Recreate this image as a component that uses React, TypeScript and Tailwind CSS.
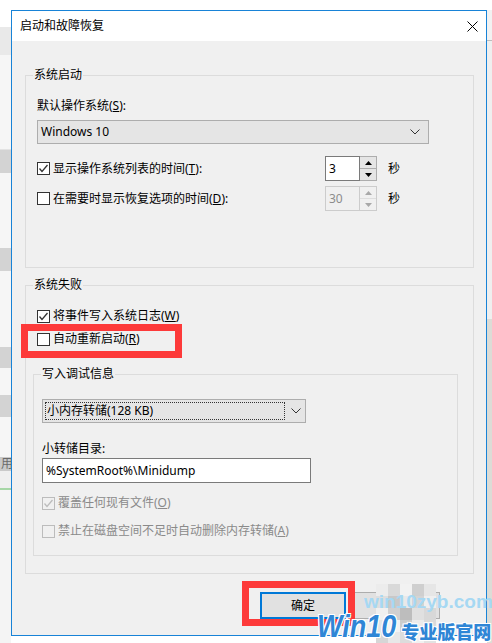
import React from "react";

const FONT = "font-['Noto_Sans','Noto_Sans_CJK_SC',sans-serif]";

function Check({ checked, disabled }: { checked?: boolean; disabled?: boolean }) {
  return (
    <span
      className={`inline-flex w-[13px] h-[13px] shrink-0 items-center justify-center border ${
        disabled ? "border-[#bcbcbc] bg-[#f0f0f0]" : "border-[#333333] bg-white"
      }`}
    >
      {checked && (
        <svg width="11" height="11" viewBox="0 0 11 11">
          <polyline
            points="1.5,5.5 4,8.5 9.5,2"
            fill="none"
            stroke={disabled ? "#bcbcbc" : "#333333"}
            strokeWidth="1.3"
          />
        </svg>
      )}
    </span>
  );
}

function Chevron() {
  return (
    <svg width="10" height="6" viewBox="0 0 10 6">
      <polyline points="0.5,0.5 5,5 9.5,0.5" fill="none" stroke="#333" strokeWidth="1" />
    </svg>
  );
}

function Spin({ value, disabled }: { value: string; disabled?: boolean }) {
  return (
    <div className="flex h-[25px] w-[52px]">
      <div
        className={`flex-1 flex items-center pl-[3px] border text-[12px] ${
          disabled ? "border-[#cccccc] bg-[#f0f0f0] text-[#8c8c8c]" : "border-[#7a7a7a] bg-white text-black"
        }`}
      >
        {value}
      </div>
      <div className={`w-[17px] flex flex-col border border-l-0 ${disabled ? "border-[#cccccc]" : "border-[#adadad]"}`}>
        <div className={`flex-1 flex items-center justify-center border-b ${disabled ? "bg-[#f0f0f0] border-[#dddddd]" : "bg-[#e5e5e5] border-[#adadad]"}`}>
          <svg width="7" height="4" viewBox="0 0 7 4">
            <polygon points="0,4 7,4 3.5,0" fill={disabled ? "#a8a8a8" : "#000"} />
          </svg>
        </div>
        <div className={`flex-1 flex items-center justify-center ${disabled ? "bg-[#f0f0f0]" : "bg-[#e5e5e5]"}`}>
          <svg width="7" height="4" viewBox="0 0 7 4">
            <polygon points="0,0 7,0 3.5,4" fill={disabled ? "#a8a8a8" : "#000"} />
          </svg>
        </div>
      </div>
    </div>
  );
}

const mosaic = [
  "bg-[#ececec]", "bg-[#d9d9d9]", "bg-[#f2f2f2]", "bg-[#cfcfcf]", "bg-[#e6e6e6]",
  "bg-[#dedede]", "bg-[#c8c8c8]", "bg-[#e9e9e9]", "bg-[#d4d4d4]", "bg-[#efefef]",
  "bg-[#f0f0f0]", "bg-[#d0d0d0]", "bg-[#bdbdbd]", "bg-[#e0e0e0]", "bg-[#d8d8d8]",
  "bg-[#e4e4e4]", "bg-[#f3f3f3]", "bg-[#cccccc]", "bg-[#ebebeb]", "bg-[#dadada]",
  "bg-[#d6d6d6]", "bg-[#e8e8e8]", "bg-[#dcdcdc]", "bg-[#f1f1f1]", "bg-[#e2e2e2]",
];

export default function App() {
  return (
    <div className={`relative w-[492px] h-[643px] bg-white overflow-hidden ${FONT} text-[12px] leading-[16px] text-black`}>
      <div className="flex h-full">
        {/* left background strip */}
        <div className="w-[11px] flex flex-col">
          <div className="h-[27px] bg-white" />
          <div className="h-[28px] bg-[#e9e9e9]" />
          <div className="h-[95px] bg-[#f6f6f6] border-b border-[#e3e3e3]" />
          <div className="h-[23px] bg-[#d3d3d3]" />
          <div className="h-[75px] bg-[#f6f6f6]" />
          <div className="h-[23px] bg-[#d3d3d3]" />
          <div className="h-[76px] bg-[#f6f6f6]" />
          <div className="h-[21px] bg-[#d3d3d3]" />
          <div className="h-[27px] bg-[#f6f6f6]" />
          <div className="h-[22px] bg-[#d3d3d3]" />
          <div className="h-[40px] bg-[#f6f6f6]" />
          <div className="h-[14px] bg-[#c9c9c9] overflow-hidden text-[12px] leading-[14px] text-[#6a6a6a] pl-[1px]">用</div>
          <div className="h-[17px] bg-[#efefef]" />
          <div className="h-[2px] bg-[#a6d6a6]" />
          <div className="flex-1 bg-[#f4f4f4]" />
        </div>

        <div className="flex flex-col">
          <div className="h-[10px]" />
          {/* dialog */}
          <div className="w-[476px] h-[626px] border border-[#1883d7] bg-[#f0f0f0] flex flex-col">
            <div className="h-[30px] bg-white flex items-center justify-between pl-[8px] pr-[8px]">
              <span className="text-[12px]">启动和故障恢复</span>
              <svg width="11" height="11" viewBox="0 0 11 11">
                <path d="M0.5 0.5 L10.5 10.5 M10.5 0.5 L0.5 10.5" stroke="#000" strokeWidth="1" />
              </svg>
            </div>

            <div className="flex-1 flex flex-col pl-[13px] pr-[12px] pt-[34px]">
              {/* group 1 */}
              <div className="relative h-[193px] border border-[#dcdcdc] flex flex-col pl-[11px] pt-[22px]">
                <span className="absolute left-[7px] top-[-9px] bg-[#f0f0f0] px-[1px]">系统启动</span>
                <div className="h-[16px]">
                  默认操作系统(<u>S</u>):
                </div>
                <div className="mt-[6px] h-[24px] w-[392px] border border-[#adadad] bg-[#e5e5e5] flex items-center justify-between pl-[3px] pr-[8px]">
                  <span>Windows 10</span>
                  <Chevron />
                </div>
                <div className="mt-[12px] h-[25px] flex items-center">
                  <div className="w-[288px] flex items-center gap-[3px]">
                    <Check checked />
                    <span>
                      显示操作系统列表的时间(<u>T</u>):
                    </span>
                  </div>
                  <Spin value="3" />
                  <span className="ml-[11px]">秒</span>
                </div>
                <div className="mt-[5px] h-[25px] flex items-center">
                  <div className="w-[288px] flex items-center gap-[3px]">
                    <Check />
                    <span>
                      在需要时显示恢复选项的时间(<u>D</u>):
                    </span>
                  </div>
                  <Spin value="30" disabled />
                  <span className="ml-[11px]">秒</span>
                </div>
              </div>

              {/* group 2 */}
              <div className="relative mt-[17px] h-[289px] border border-[#dcdcdc] flex flex-col pt-[22px]">
                <span className="absolute left-[7px] top-[-9px] bg-[#f0f0f0] px-[1px]">系统失败</span>
                <div className="ml-[11px] h-[16px] flex items-center gap-[3px]">
                  <Check checked />
                  <span>
                    将事件写入系统日志(<u>W</u>)
                  </span>
                </div>
                <div className="relative ml-[11px] mt-[7px] h-[16px] flex items-center gap-[3px]">
                  <Check />
                  <span>
                    自动重新启动(<u>R</u>)
                  </span>
                  <div className="absolute left-[-16px] top-[-7px] w-[161px] h-[34px] border-[7px] border-[#fd3a3a]" />
                </div>

                {/* inner group */}
                <div className="relative ml-[7px] mt-[27px] w-[425px] h-[182px] border border-[#dcdcdc] flex flex-col pl-[8px] pt-[24px]">
                  <span className="absolute left-[7px] top-[-9px] bg-[#f0f0f0] px-[1px]">写入调试信息</span>
                  <div className="h-[24px] w-[264px] border border-[#adadad] bg-[#e5e5e5] flex items-center p-[2px] pr-[4px]">
                    <div className="flex-1 h-full border border-dotted border-[#333] flex items-center pl-[1px]">
                      小内存转储(128 KB)
                    </div>
                    <div className="w-[16px] flex justify-end">
                      <Chevron />
                    </div>
                  </div>
                  <div className="mt-[18px] h-[16px]">小转储目录:</div>
                  <div className="mt-[1px] h-[25px] w-[269px] border border-[#7a7a7a] bg-white flex items-center pl-[3px]">
                    %SystemRoot%\Minidump
                  </div>
                  <div className="mt-[12px] h-[16px] flex items-center gap-[3px] text-[#8a8a8a]">
                    <Check checked disabled />
                    <span>
                      覆盖任何现有文件(<u>O</u>)
                    </span>
                  </div>
                  <div className="mt-[12px] h-[16px] flex items-center gap-[3px] text-[#8a8a8a]">
                    <Check disabled />
                    <span>
                      禁止在磁盘空间不足时自动删除内存转储(<u>A</u>)
                    </span>
                  </div>
                </div>
              </div>

              {/* buttons */}
              <div className="mt-[18px] flex pl-[235px] gap-[8px]">
                <div className="relative w-[86px] h-[27px] border-2 border-[#0078d7] bg-[#e1e1e1] flex items-center justify-center">
                  确定
                  <div className="absolute left-[-20px] top-[-13px] w-[113px] h-[45px] border-[7px] border-[#fd3a3a]" />
                </div>
                <div className="w-[86px] h-[27px] border border-[#adadad] bg-[#e1e1e1] flex items-center justify-center">
                  取消
                </div>
              </div>
            </div>
          </div>
        </div>

        {/* right strip */}
        <div className="flex-1 flex flex-col">
          <div className="h-[10px] bg-white" />
          <div className="h-[31px] bg-[#f2f2f2] border-b border-[#bdbdbd]" />
          <div className="h-[278px] bg-[#efefef]" />
          <div className="flex-1 bg-[#dcdcd6]" />
        </div>
      </div>

      {/* mosaic overlay */}
      <div className="absolute left-[376px] top-[584px] grid grid-cols-5 w-[60px]">
        {mosaic.map((c, i) => (
          <div key={i} className={`h-[12px] ${c}`} />
        ))}
      </div>

      {/* watermark */}
      <div className="absolute left-[364px] top-[591px] font-['Liberation_Sans',sans-serif] font-bold text-[19px] leading-[22px] text-[#a6d8f3]">
        win10zyb.com
      </div>
      <div className="absolute left-[317px] top-[614px] flex items-end whitespace-nowrap [text-shadow:1px_1px_0_#fff,-1px_-1px_0_#fff,1px_-1px_0_#fff,-1px_1px_0_#fff]">
        <span className="font-['Liberation_Sans',sans-serif] italic font-black text-[27px] leading-[30px] text-[#2f86d6] origin-bottom scale-y-[1.15]">
          Win10
        </span>
        <span className="ml-[5px] mb-[2px] font-['Noto_Sans_CJK_SC',sans-serif] font-black text-[18px] leading-[22px] text-[#2f86d6]">
          专业版官网
        </span>
      </div>
    </div>
  );
}
